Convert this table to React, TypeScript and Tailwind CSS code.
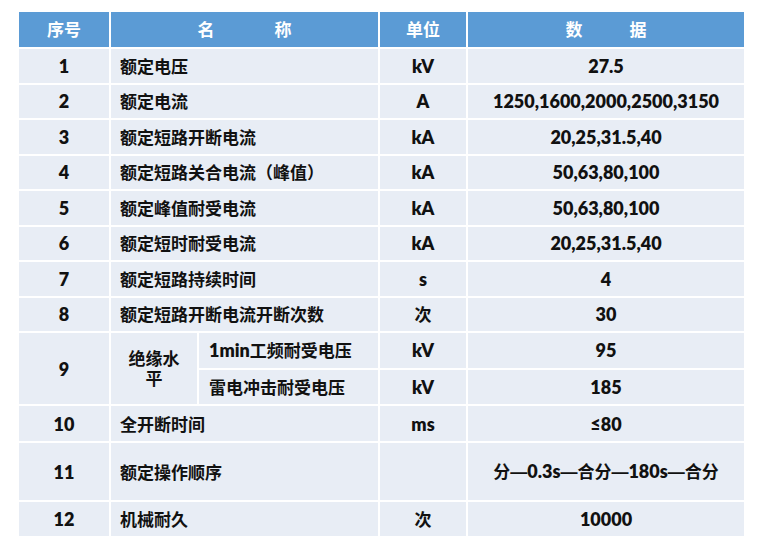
import React from 'react';

type Row = { no: string; name: string; unit: string; value: string };

const rows: Row[] = [
  { no: '1', name: '额定电压', unit: 'kV', value: '27.5' },
  { no: '2', name: '额定电流', unit: 'A', value: '1250,1600,2000,2500,3150' },
  { no: '3', name: '额定短路开断电流', unit: 'kA', value: '20,25,31.5,40' },
  { no: '4', name: '额定短路关合电流（峰值）', unit: 'kA', value: '50,63,80,100' },
  { no: '5', name: '额定峰值耐受电流', unit: 'kA', value: '50,63,80,100' },
  { no: '6', name: '额定短时耐受电流', unit: 'kA', value: '20,25,31.5,40' },
  { no: '7', name: '额定短路持续时间', unit: 's', value: '4' },
  { no: '8', name: '额定短路开断电流开断次数', unit: '次', value: '30' },
];

const tail: Row[] = [
  { no: '10', name: '全开断时间', unit: 'ms', value: '≤80' },
  { no: '11', name: '额定操作顺序', unit: '', value: '分—0.3s—合分—180s—合分' },
  { no: '12', name: '机械耐久', unit: '次', value: '10000' },
];

const cell = 'bg-[#e8edf5] flex items-center';
const head = 'bg-[#5b9bd5] flex items-center justify-center text-white';

// latin runs are set a bit larger than the chinese, like the calibri/yahei mix
const T: React.FC<{ s: string }> = ({ s }) => {
  const parts = s.match(/—|[\u3000-\u9fff\uff00-\uffef]+|[^\u3000-\u9fff\uff00-\uffef—]+/g) || [];
  return (
    <span>
      {parts.map((p, i) => {
        if (p === '—')
          return (
            <span key={i} className="text-[17px]" style={{ fontFamily: '"Liberation Sans", sans-serif' }}>
              {p}
            </span>
          );
        if (/[\u3000-\u9fff\uff00-\uffef]/.test(p))
          return (
            <span key={i} className="text-[17px]" style={{ fontFamily: '"Noto Sans CJK SC", sans-serif' }}>
              {p}
            </span>
          );
        return (
          <span key={i} className="text-[18px] font-extrabold">
            {p}
          </span>
        );
      })}
    </span>
  );
};

const RowCells: React.FC<{ r: Row }> = ({ r }) => (
  <>
    <div className={`${cell} justify-center`}><T s={r.no} /></div>
    <div className={`${cell} col-span-2 pl-[9px]`}><T s={r.name} /></div>
    <div className={`${cell} justify-center`}><T s={r.unit} /></div>
    <div className={`${cell} justify-center`}><T s={r.value} /></div>
  </>
);

export default function App() {
  return (
    <div className="w-[764px] h-[546px] bg-white pt-[12px] pl-[19px] overflow-hidden">
      <div
        className="grid w-[725px] gap-[2px] grid-cols-[90px_86px_179px_86px_276px] grid-rows-[35px_repeat(8,33.5px)_34.5px_34.5px_35px_57px_34px] font-bold text-[17px] leading-none text-[#111]"
        style={{ fontFamily: 'Lato, "Noto Sans CJK SC", sans-serif' }}
      >
        <div className={head}>序号</div>
        <div className={`${head} col-span-2 gap-[60px]`}>
          <span>名</span>
          <span>称</span>
        </div>
        <div className={head}>单位</div>
        <div className={`${head} gap-[47px]`}>
          <span>数</span>
          <span>据</span>
        </div>

        {rows.map((r) => (
          <RowCells key={r.no} r={r} />
        ))}

        {/* 9: 绝缘水平, two sub rows */}
        <div className={`${cell} justify-center row-span-2`}><T s="9" /></div>
        <div className={`${cell} justify-center row-span-2 text-center leading-[20px]`}>
          绝缘水
          <br />平
        </div>
        <div className={`${cell} pl-[10px]`}><T s="1min工频耐受电压" /></div>
        <div className={`${cell} justify-center`}><T s="kV" /></div>
        <div className={`${cell} justify-center`}><T s="95" /></div>
        <div className={`${cell} pl-[10px]`}><T s="雷电冲击耐受电压" /></div>
        <div className={`${cell} justify-center`}><T s="kV" /></div>
        <div className={`${cell} justify-center`}><T s="185" /></div>

        {tail.map((r) => (
          <RowCells key={r.no} r={r} />
        ))}
      </div>
    </div>
  );
}
